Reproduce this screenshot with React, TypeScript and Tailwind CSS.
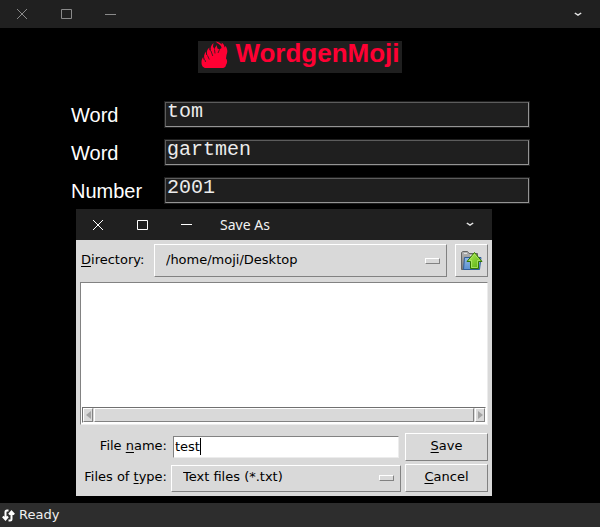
import React, { useState } from 'react';

const UI_FONT = "font-['DejaVu_Sans',sans-serif] text-[13px] leading-5";
const RAISED = 'border border-t-white border-l-white border-b-[#828282] border-r-[#828282] bg-[#d9d9d9]';
const SUNKEN = 'border border-t-[#828282] border-l-[#828282] border-b-[#ececec] border-r-[#ececec] bg-white';

function WindowBar({ title, muted, className }: { title?: string; muted?: boolean; className: string }) {
  const button = `flex h-full w-11 items-center justify-center ${muted ? 'text-[#8a8a8a]' : 'text-white'}`;
  return (
    <header className={`flex items-center bg-[#202020] ${className}`}>
      <button aria-label="Close" className={button}>
        <svg width="10" height="10" viewBox="0 0 10 10" stroke="currentColor">
          <path d="M0 0l10 10M10 0L0 10" />
        </svg>
      </button>
      <button aria-label="Maximize" className={button}>
        <svg width="11" height="10" viewBox="0 0 11 10" fill="none" stroke="currentColor">
          <path d="M.5.5h10v9H.5z" />
        </svg>
      </button>
      <button aria-label="Minimize" className={button}>
        <svg width="11" height="11" viewBox="0 0 11 11" stroke="currentColor">
          <path d="M0 5.5h11" />
        </svg>
      </button>
      <h2 className="ml-3 font-['Noto_Sans',sans-serif] text-[14px] leading-5 text-[#f2f2f2]">{title}</h2>
      <button aria-label="Window menu" className="ml-auto flex h-full w-11 items-center justify-center text-[#e4e4e4]">
        <svg width="8" height="5" viewBox="0 0 8 5" fill="none" stroke="currentColor" strokeWidth="1.5">
          <path d="M.8 1 4 3.2 7.2 1" />
        </svg>
      </button>
    </header>
  );
}

function Flame() {
  return (
    <svg width="27" height="28" viewBox="0 0 27 28" aria-hidden="true">
      <path
        fill="#ff0033"
        d="M5 27C2 27 .5 24.500 .5 21.500C.5 19 1 17.500 2.200 16L2.500 18.500L4 19C2.500 16 2.700 13.500 5 10.500L5 13.500L6.500 14.500C5 10.500 6.500 8.500 8.300 6.500L8.300 9L10 10C9 6.500 10 4.500 12.500 2L12 5.500L13.500 8.500C13.500 6.500 15 6 15.500 4L16.500 7.500L18.500 8.500L20.500 7C20.500 4 17 3 14.500 .5C18 .8 19.500 2.500 21 3.500L20.500 1.500C23 3 23.500 5 23.500 6.500L24.700 5C27 9 26.500 11.500 25.500 14L25 17.500C26.500 19 26.500 22 25 24L24.500 25.500C23.500 27 22.500 27 21 27Z"
      />
      <path d="M6.500 14.500l1.800 4M10 10l1.800 5M13.500 8.500l.5 4M18.500 8.500l-1.500 3.500M4 19l.5 2" fill="none" stroke="#1f1f1f" strokeWidth=".8" />
    </svg>
  );
}

function FolderUp() {
  return (
    <svg width="22" height="20" viewBox="0 0 22 20" aria-hidden="true">
      <defs>
        <linearGradient id="folder" x2="0" y2="1"><stop stopColor="#b5b5b5" /><stop offset="1" stopColor="#777" /></linearGradient>
        <linearGradient id="front" x2="0" y2="1"><stop stopColor="#91b8e3" /><stop offset="1" stopColor="#5c91cf" /></linearGradient>
        <linearGradient id="arrow" x2="1" y2="1"><stop stopColor="#b6ef58" /><stop offset="1" stopColor="#4fa90c" /></linearGradient>
      </defs>
      <path d="M.5 18.500V1.500L2 .5H6.500L8 2.500H16.500V18.500Z" fill="url(#folder)" stroke="#666" />
      <path d="M3 2.500h3M9 4.500h6" stroke="#e0e0e0" />
      <path d="M3.500 6.500H20L18.500 18.500H2.500Z" fill="url(#front)" stroke="#315f99" />
      <path d="M13.500 1.500 21 10.500H17.500V17.500H9.500V10.500H6Z" fill="url(#arrow)" stroke="#327600" />
      <path d="M13.500 3.200 19 9.500H16.500V16.500H10.500V9.500H8Z" fill="none" stroke="#bdf07a" opacity=".65" />
    </svg>
  );
}

function Field({ id, label, initial }: { id: string; label: string; initial: string }) {
  const [value, setValue] = useState(initial);
  return (
    <div className="flex items-center">
      <label htmlFor={id} className="w-[93px] shrink-0 text-[20px] leading-6 text-white">{label}</label>
      <div className="min-w-0 flex-1 border border-[#1f1f1f]">
        <input
          id={id}
          value={value}
          onChange={(e) => setValue(e.target.value)}
          className="block h-[25px] w-full border border-t-[#5c5c5c] border-r-[#949494] border-b-[#949494] border-l-[#5c5c5c] bg-[#1f1f1f] px-px pb-1.5 font-['Courier_New','Liberation_Mono',monospace] text-[20px] leading-4 text-[#ececec] outline-none"
        />
      </div>
    </div>
  );
}

function Menu({ id, option, className }: { id: string; option: string; className: string }) {
  return (
    <div className={`relative min-w-0 flex-1 ${className}`}>
      <select id={id} className={`h-full w-full appearance-none rounded-none pb-0.5 pl-[11px] text-black outline-none ${RAISED}`}>
        <option>{option}</option>
      </select>
      <span className={`pointer-events-none absolute right-[7px] top-1/2 h-1.5 w-[15px] -translate-y-1/2 ${RAISED}`} />
    </div>
  );
}

function Key({ children }: { children: string }) {
  return <span className="underline decoration-1 underline-offset-2 [text-decoration-skip-ink:none]">{children}</span>;
}

function SaveDialog() {
  const [name, setName] = useState('test');
  const label = 'shrink-0 pb-0.5';
  const action = `h-full w-[83px] pb-0.5 ${RAISED}`;
  return (
    <section
      role="dialog"
      aria-label="Save As"
      className={`absolute left-[76px] top-[209px] w-[416px] bg-[#d9d9d9] text-black ${UI_FONT}`}
    >
      <WindowBar title="Save As" className="h-[31px]" />
      <div className="p-1">
        <div className="flex h-[33px] items-center">
          <label htmlFor="directory" className={`w-[74px] pl-px ${label}`}><Key>D</Key>irectory:</label>
          <Menu id="directory" option="/home/moji/Desktop" className="h-full" />
          <button aria-label="Parent directory" className={`ml-2 flex h-full w-[33px] items-center justify-center ${RAISED}`}>
            <FolderUp />
          </button>
        </div>

        <div className={`mt-[5px] flex h-[143px] flex-col p-px ${SUNKEN}`}>
          <div role="listbox" aria-label="Files" className="flex-1" />
          <div className="flex h-4 gap-px border border-t-[#707070] border-l-[#707070] border-r-white border-b-white bg-[#d9d9d9]">
            <button aria-label="Scroll left" className={`flex w-2.5 items-center justify-center ${RAISED}`}>
              <svg width="5" height="8" viewBox="0 0 5 8" fill="#a3a3a3"><path d="M5 0v8L0 4z" /></svg>
            </button>
            <div className={`flex-1 ${RAISED}`} />
            <button aria-label="Scroll right" className={`flex w-2.5 items-center justify-center ${RAISED}`}>
              <svg width="5" height="8" viewBox="0 0 5 8" fill="#a3a3a3"><path d="M0 0v8l5-4z" /></svg>
            </button>
          </div>
        </div>

        <div className="mt-2 flex h-7 items-center">
          <label htmlFor="filename" className={`w-[87px] text-right ${label}`}>File <Key>n</Key>ame:</label>
          <div className="relative ml-1.5 min-w-0 flex-1">
            <input
              id="filename"
              value={name}
              onChange={(e) => setName(e.target.value)}
              className={`block h-[22px] w-full px-px pb-0.5 caret-transparent outline-none ${SUNKEN}`}
            />
            <span className="pointer-events-none absolute left-[27px] top-0.5 h-[17px] w-px bg-black" />
          </div>
          <button className={`ml-1.5 ${action}`}><Key>S</Key>ave</button>
        </div>

        <div className="mt-[3px] flex h-7 items-center">
          <label htmlFor="filetype" className={`w-[87px] text-right ${label}`}>Files of <Key>t</Key>ype:</label>
          <Menu id="filetype" option="Text files (*.txt)" className="ml-1 h-[27px]" />
          <button className={`ml-1 ${action}`}><Key>C</Key>ancel</button>
        </div>
      </div>
    </section>
  );
}

export default function App() {
  return (
    <div className="relative flex min-h-screen flex-col bg-black font-['Liberation_Sans',Arial,sans-serif]">
      <WindowBar muted className="h-7" />
      <main className="flex-1 pt-[13px]">
        <h1 className="mx-auto flex h-8 w-fit items-start gap-[7px] bg-[#1f1f1f] pl-[3px] pr-0.5 text-[26px] font-bold leading-6 text-[#ff0033]">
          <Flame />
          <span>WordgenMoji</span>
        </h1>
        <form className="mt-7 flex flex-col gap-[11px] pl-[71px] pr-[70px]">
          <Field id="word-a" label="Word" initial="tom" />
          <Field id="word-b" label="Word" initial="gartmen" />
          <Field id="number" label="Number" initial="2001" />
        </form>
      </main>
      <footer className={`flex h-6 items-center gap-1 bg-[#2d2d2d] pl-0.5 text-[#f0f0f0] ${UI_FONT}`}>
        <svg width="13" height="13" viewBox="0 0 13 13" fill="none" stroke="#fff" strokeWidth="2" aria-hidden="true">
          <path d="M6.500 1.500H5Q3.500 1.500 3.500 3v7M.8 7.500 3.500 10.500 6 7.500M6.500 11.500H8Q9.500 11.500 9.500 10V3M7 5.500 9.500 2.500 12.200 5.500" />
        </svg>
        <span>Ready</span>
      </footer>
      <SaveDialog />
    </div>
  );
}
